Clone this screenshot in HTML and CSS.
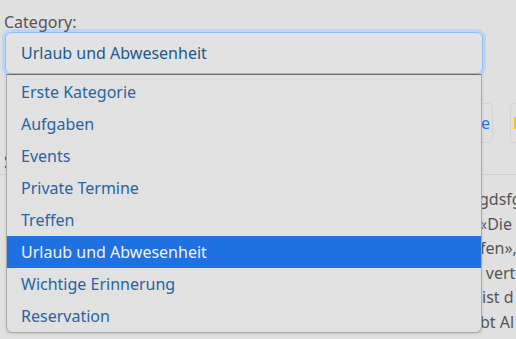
FILE: index.html
```html
<!DOCTYPE html>
<html lang="de">
<head>
<meta charset="utf-8">
<title>Category</title>
<link rel="stylesheet" href="styles.css">
</head>
<body>
<div class="page">
  <label class="label">Category:</label>
  <div class="select">Urlaub und Abwesenheit</div>
  <div class="content">
    <div class="left">
      <div class="heading">S</div>
    </div>
    <div class="right">
      <div class="toolbar">
        <span class="btn btn-text">Speichere</span>
        <span class="btn btn-icon"><span class="yellow"></span></span>
      </div>
      <div class="rule"></div>
      <div class="para">
        <div class="line">gdsfg</div>
        <div class="line">«Die</div>
        <div class="line shift-r">fen»,</div>
        <div class="line shift-l">s vert</div>
        <div class="line shift-r2">ist d</div>
        <div class="line shift-l2">ubt Al</div>
      </div>
    </div>
  </div>
  <ul class="dropdown">
    <li class="opt">Erste Kategorie</li>
    <li class="opt">Aufgaben</li>
    <li class="opt">Events</li>
    <li class="opt">Private Termine</li>
    <li class="opt">Treffen</li>
    <li class="opt selected">Urlaub und Abwesenheit</li>
    <li class="opt">Wichtige Erinnerung</li>
    <li class="opt">Reservation</li>
  </ul>
</div>
</body>
</html>
```
FILE: styles.css
```css
html, body {
  margin: 0;
  padding: 0;
  background: #e0e0e0;
  font-family: "Noto Sans", "Open Sans", sans-serif;
  font-size: 16px;
  overflow: hidden;
}
.page {
  position: relative;
  padding: 12px 0 0 4px;
  height: 339px;
  box-sizing: border-box;
}
.label {
  display: block;
  color: #555;
  line-height: 20px;
  height: 20px;
}
.select {
  margin: 0 0 0 1px;
  width: 478px;
  height: 42px;
  box-sizing: border-box;
  border: 1px solid #8fbef6;
  border-radius: 6px;
  box-shadow: 0 0 0 3px #bcd5f6;
  background: #e2e2e2;
  color: #22598c;
  padding: 0 0 0 15px;
  line-height: 40px;
}
.content {
  display: flex;
  margin-top: 29px;
}
.left {
  width: 474px;
  flex: none;
}
.heading {
  color: #444;
  margin-top: 46px;
  font-size: 18px;
}
.right {
  flex: 1;
}
.toolbar {
  display: flex;
  gap: 17px;
  margin-left: -65px;
}
.btn {
  display: flex;
  align-items: center;
  height: 40px;
  box-sizing: border-box;
  border: 1px solid #d3d3d3;
  border-radius: 4px;
}
.btn-text {
  width: 80px;
  justify-content: flex-end;
  padding-right: 2px;
  color: #1a73e8;
  overflow: hidden;
  white-space: nowrap;
}
.btn-icon {
  width: 40px;
  padding: 0 3px;
}
.yellow {
  width: 12px;
  height: 12px;
  background: #f7c515;
}
.rule {
  border-top: 1px solid #cfcfcf;
  margin-top: 31px;
  margin-left: -480px;
}
.para {
  color: #555;
  padding-top: 12px;
  margin-left: 1px;
}
.line {
  line-height: 24.5px;
  white-space: nowrap;
}
.shift-r { margin-left: 1px; }
.shift-r2 { margin-left: 3px; }
.shift-l { margin-left: -5px; }
.shift-l2 { margin-left: -9px; }
.dropdown {
  position: absolute;
  left: 6px;
  top: 74px;
  width: 476px;
  margin: 0;
  padding: 1px 0 0 0;
  list-style: none;
  background: #e1e1e1;
  border: 1px solid #a9a9a9;
  border-top: 1px solid #6f6f6f;
  border-radius: 0 0 6px 6px;
  box-sizing: border-box;
  box-shadow: 0 1px 3px rgba(0,0,0,0.12);
  overflow: hidden;
}
.opt {
  height: 32px;
  line-height: 32px;
  padding-left: 14px;
  color: #2565a8;
}
.opt.selected {
  background: #1f70e1;
  color: #f2f2ff;
}
```
